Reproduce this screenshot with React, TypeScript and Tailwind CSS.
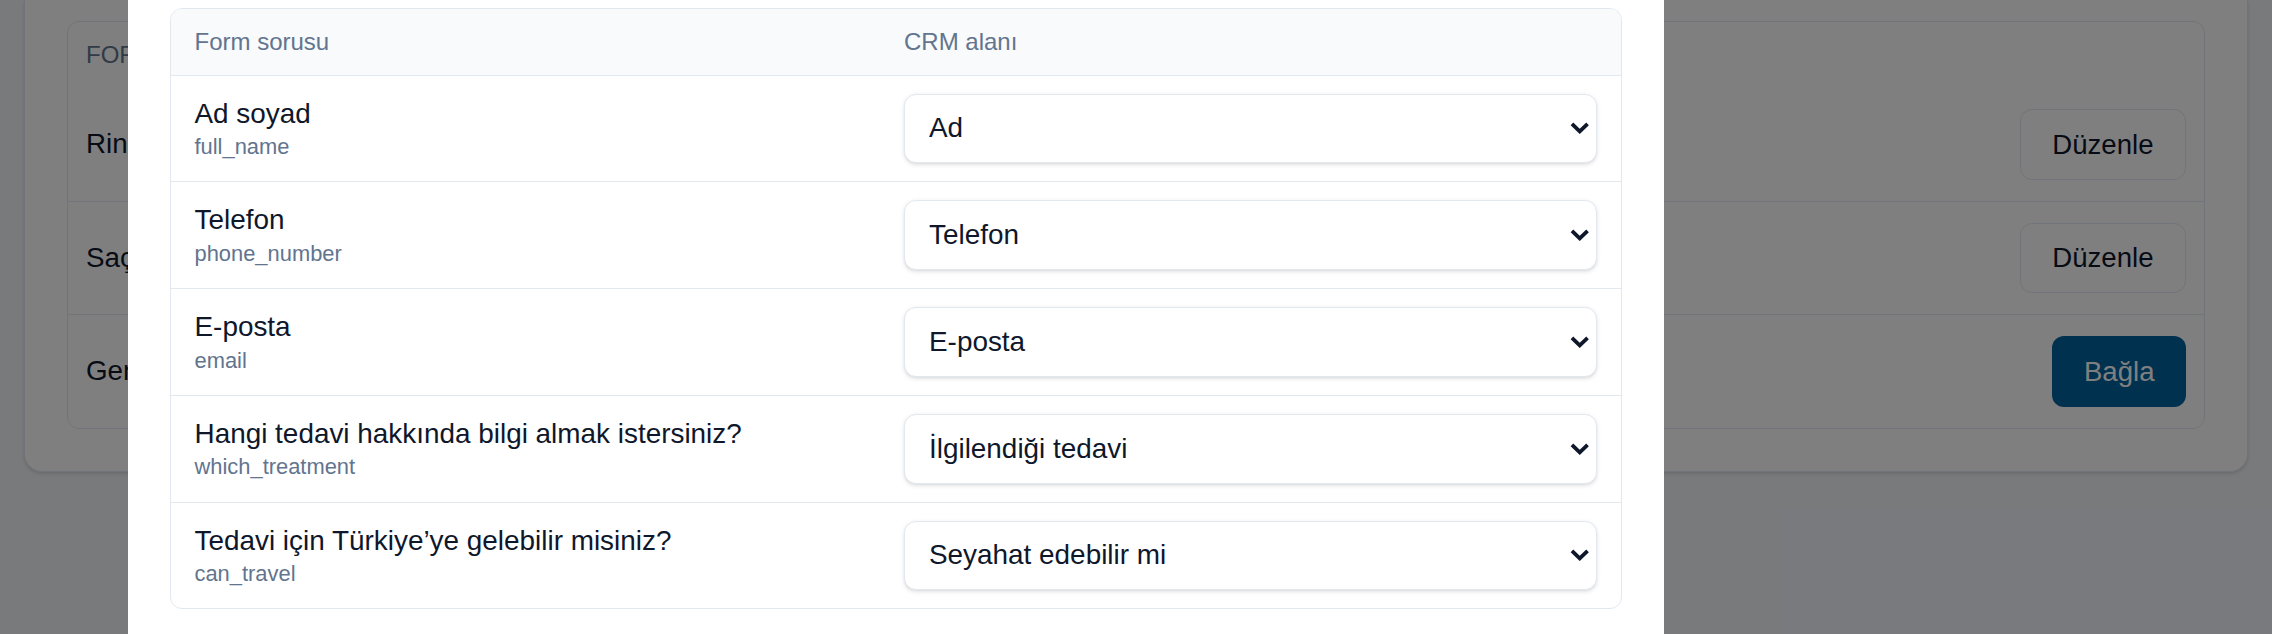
import { useState } from "react";

type FieldMap = {
  label: string;
  key: string;
  crm: string;
};

const FIELDS: FieldMap[] = [
  { label: "Ad soyad", key: "full_name", crm: "Ad" },
  { label: "Telefon", key: "phone_number", crm: "Telefon" },
  { label: "E-posta", key: "email", crm: "E-posta" },
  {
    label: "Hangi tedavi hakkında bilgi almak istersiniz?",
    key: "which_treatment",
    crm: "İlgilendiği tedavi",
  },
  {
    label: "Tedavi için Türkiye’ye gelebilir misiniz?",
    key: "can_travel",
    crm: "Seyahat edebilir mi",
  },
];

const CRM_OPTIONS = [
  "Ad",
  "Soyad",
  "Telefon",
  "E-posta",
  "İlgilendiği tedavi",
  "Seyahat edebilir mi",
  "Not",
];

const FORMS = [
  { name: "Ringostat başvuru formu", connected: true },
  { name: "Saç ekimi kampanyası", connected: true },
  { name: "Genel bilgi formu", connected: false },
];

function FormsCard() {
  return (
    <div className="px-4">
      <div className="rounded-b-xl border border-t-0 border-slate-200 bg-white px-7 pt-3.5 pb-7 shadow-sm">
        <div className="rounded-lg border border-slate-200">
          <div className="px-3 py-2.5 text-base uppercase text-slate-500">Form adı</div>
          {FORMS.map((form, i) => (
            <div
              key={form.name}
              className={`flex items-center justify-between px-3 py-3.5 ${
                i > 0 ? "border-t border-slate-200" : ""
              }`}
            >
              <span className="text-[18.5px] text-slate-900">{form.name}</span>
              {form.connected ? (
                <button className="flex h-[47px] items-center rounded-lg border border-slate-200 bg-white px-[21px] text-[18.4px] text-slate-900">
                  Düzenle
                </button>
              ) : (
                <button className="flex h-[47px] items-center rounded-lg bg-[#00629f] px-[21px] text-[18.4px] text-white">
                  Bağla
                </button>
              )}
            </div>
          ))}
        </div>
      </div>
    </div>
  );
}

function CrmSelect({
  value,
  onChange,
}: {
  value: string;
  onChange: (v: string) => void;
}) {
  return (
    <div className="relative">
      <select
        className="h-[46.5px] w-full appearance-none rounded-lg border border-slate-200 bg-white pr-10 pl-4 text-[18.6px] text-slate-900 shadow-sm"
        value={value}
        onChange={(e) => onChange(e.target.value)}
      >
        {CRM_OPTIONS.map((opt) => (
          <option key={opt} value={opt}>
            {opt}
          </option>
        ))}
      </select>
      <svg
        width="13"
        height="8"
        viewBox="0 0 13 8"
        fill="none"
        className="pointer-events-none absolute top-1/2 right-[5px] -translate-y-1/2 text-slate-900"
      >
        <path
          d="M1.3 1.3L6.5 6.3L11.7 1.3"
          stroke="currentColor"
          strokeWidth="2.5"
          strokeLinejoin="miter"
        />
      </svg>
    </div>
  );
}

function MappingTable() {
  const [values, setValues] = useState<Record<string, string>>(
    Object.fromEntries(FIELDS.map((f) => [f.key, f.crm])),
  );

  return (
    <div className="overflow-hidden rounded-lg border border-slate-200">
      {/* Header */}
      <div className="grid grid-cols-[473px_1fr] border-b border-slate-200 bg-slate-50 text-base text-slate-500">
        <div className="px-4 py-2.5">Form sorusu</div>
        <div className="px-4 py-2.5">CRM alanı</div>
      </div>

      {/* Rows */}
      {FIELDS.map((field, i) => (
        <div
          key={field.key}
          className={`grid grid-cols-[473px_1fr] items-center ${
            i > 0 ? "border-t border-slate-200" : ""
          }`}
        >
          <div className="px-4 py-3">
            <div className="text-[18.6px] leading-[25px] text-slate-900">{field.label}</div>
            <div className="text-[14.6px] leading-5 text-slate-500">{field.key}</div>
          </div>
          <div className="px-4 py-3">
            <CrmSelect
              value={values[field.key]}
              onChange={(v) => setValues((s) => ({ ...s, [field.key]: v }))}
            />
          </div>
        </div>
      ))}
    </div>
  );
}

export default function App() {
  return (
    <div className="relative h-[423px] overflow-hidden bg-slate-100 font-['Liberation_Sans',Arial,sans-serif] [zoom:1.5]">
      <FormsCard />

      {/* Overlay */}
      <div className="absolute inset-0 bg-black/50" />

      {/* Modal */}
      <div className="absolute inset-y-0 left-[85px] w-[1024px] bg-white px-7 pt-[5px]">
        <MappingTable />
      </div>
    </div>
  );
}
